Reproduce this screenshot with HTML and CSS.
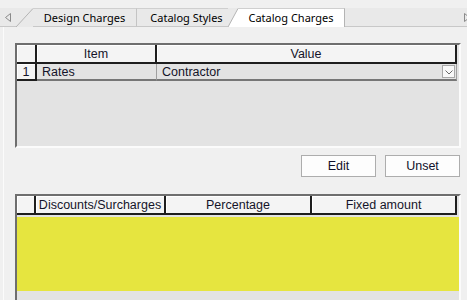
FILE: index.html
```html
<!DOCTYPE HTML>
<html>

<head>
  <meta charset="UTF-8"/>
  <title>Catalog Charges</title>
  <link rel="stylesheet" href="styles.css">
</head>

<body>
  <div class="tabbar">
    <div class="scroll-left">
      <svg width="6" height="9" viewBox="0 0 6 9"><polygon points="5.5,0.5 5.5,8.5 0.5,4.5" fill="none" stroke="#8a8a8a" stroke-width="1"/></svg>
    </div>
    <svg class="slant" width="17" height="19" viewBox="0 0 17 19"><line x1="0" y1="19" x2="17" y2="0.5" stroke="#b4b4b4" stroke-width="1"/></svg>
    <div class="tab tab-design">Design Charges</div>
    <div class="tab tab-styles">Catalog Styles</div>
    <svg class="slant" width="10" height="19" viewBox="0 0 10 19"><polygon points="0,19 10,0.5 10,19" fill="#fff"/><line x1="0" y1="19" x2="10" y2="0.5" stroke="#b4b4b4" stroke-width="1"/></svg>
    <div class="tab tab-active">Catalog Charges</div>
    <div class="tab-rest">
      <svg width="6" height="9" viewBox="0 0 6 9"><polygon points="0.5,0.5 0.5,8.5 5.5,4.5" fill="none" stroke="#8a8a8a" stroke-width="1"/></svg>
    </div>
  </div>

  <div class="panel">
    <div class="grid grid-charges">
      <div class="row">
        <div class="hcell col-num"></div>
        <div class="hcell col-item">Item</div>
        <div class="hcell col-value">Value</div>
      </div>
      <div class="row">
        <div class="hcell numcell col-num">1</div>
        <div class="cell col-item">Rates</div>
        <div class="cell col-value value-cell">
          <span>Contractor</span>
          <span class="dropbtn">
            <svg width="8" height="5" viewBox="0 0 8 5"><polyline points="0.5,0.5 4,4 7.5,0.5" fill="none" stroke="#6a6a6a" stroke-width="1"/></svg>
          </span>
        </div>
      </div>
    </div>

    <div class="buttons">
      <button class="btn">Edit</button>
      <button class="btn">Unset</button>
    </div>

    <div class="grid grid-discounts">
      <div class="row">
        <div class="hcell dcol-num"></div>
        <div class="hcell dcol-name">Discounts/Surcharges</div>
        <div class="hcell dcol-pct">Percentage</div>
        <div class="hcell dcol-fixed">Fixed amount</div>
      </div>
      <div class="yellow"></div>
    </div>
  </div>
</body>

</html>
```

FILE: styles.css
```css
body {
  margin: 0;
  width: 467px;
  height: 300px;
  overflow: hidden;
  background-color: #f0f0f0;
  color: #000;
  font: 12px "Liberation Sans", Arial, sans-serif;
}

/* tab strip */

.tabbar {
  display: flex;
  margin-top: 8px;
  height: 19px;
  background-color: #e9e9e9;
  font: 11px "Noto Sans", "Open Sans", sans-serif;
}

.scroll-left {
  width: 16px;
  display: flex;
  align-items: center;
  padding-left: 5px;
  box-sizing: border-box;
  border-bottom: 1px solid #c8c8c8;
}

.slant {
  display: block;
  flex: none;
}

.tab {
  box-sizing: border-box;
  height: 19px;
  line-height: 17px;
  text-align: center;
  border-top: 1px solid #cfcfcf;
  border-bottom: 1px solid #c8c8c8;
}

.tab-design {
  width: 104px;
  border-right: 1px solid #c4c4c4;
}

.tab-styles {
  width: 91px;
  padding-left: 8px;
}

.tab-active {
  width: 107px;
  background-color: #fff;
  border-right: 1px solid #b4b4b4;
  border-bottom: none;
}

.tab-rest {
  flex: 1;
  display: flex;
  align-items: center;
  justify-content: flex-end;
  margin-right: -3px;
  border-bottom: 1px solid #c8c8c8;
}

/* panel */

.panel {
  margin-left: 3px;
  height: 273px;
  border-left: 1px solid #fbfbfb;
  padding-left: 11px;
  padding-top: 16px;
  box-sizing: border-box;
}

.grid {
  width: 446px;
  box-sizing: border-box;
  border: 2px solid;
  border-color: #6e6e6e #fbfbfb #fbfbfb #6e6e6e;
  background-color: #e3e3e3;
  font: 12.5px "Liberation Sans", Arial, sans-serif;
  color: #14142a;
}

.grid-charges {
  height: 105px;
}

.row {
  display: flex;
}

.hcell {
  box-sizing: border-box;
  height: 19px;
  padding-top: 2px;
  line-height: 15px;
  text-align: center;
  white-space: nowrap;
  background-color: #f4f4f4;
  border-right: 2px solid #1e1e1e;
  border-bottom: 2px solid #1e1e1e;
  box-shadow: inset 1px 1px #fff;
}

.numcell {
  height: 17px;
  padding-top: 1px;
  line-height: 14px;
}

.cell {
  box-sizing: border-box;
  height: 17px;
  padding-top: 1px;
  line-height: 14px;
  padding-left: 5px;
  border-right: 1px solid #a0a0a0;
  border-bottom: 2px solid #767676;
}

.col-num {
  width: 20px;
}

.col-item {
  width: 120px;
}

.col-value {
  width: 300px;
}

.value-cell {
  display: flex;
  justify-content: space-between;
}

.dropbtn {
  width: 13px;
  height: 13px;
  margin: 0 1px 0 0;
  box-sizing: border-box;
  border: 1px solid #a8a8a8;
  background-color: #f8f8f8;
  display: flex;
  align-items: flex-end;
  justify-content: center;
  padding-bottom: 2px;
}

.dropbtn svg {
  display: block;
}

.buttons {
  width: 446px;
  display: flex;
  justify-content: flex-end;
  gap: 9px;
  margin-top: 7px;
  padding-right: 1px;
  box-sizing: border-box;
}

.btn {
  width: 75px;
  height: 22px;
  padding: 0;
  border: 1px solid #adadad;
  background-color: #fdfdfd;
  font: 12.5px "Liberation Sans", Arial, sans-serif;
  color: #10102a;
}

.grid-discounts {
  margin-top: 17px;
  height: 120px;
}

.dcol-num {
  width: 19px;
}

.dcol-name {
  width: 130px;
}

.dcol-pct {
  width: 146px;
}

.dcol-fixed {
  width: 145px;
}

.yellow {
  margin-top: 2px;
  height: 74px;
  background-color: #e6e53f;
}
```
